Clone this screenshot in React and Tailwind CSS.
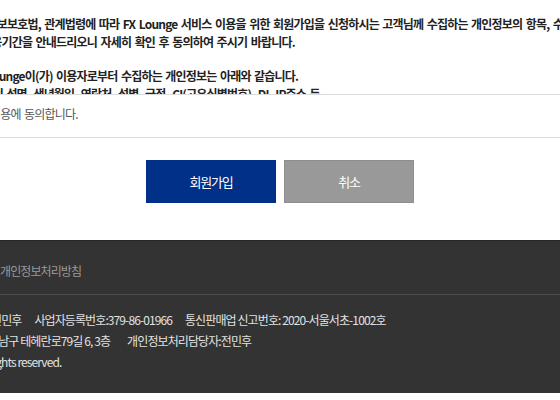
export default function App() {
  const base = "font-['Noto_Sans_CJK_KR',sans-serif] tracking-[-0.8px] [word-spacing:1.5px]";
  return (
    <div className={`w-[560px] h-[400px] overflow-hidden bg-white flex flex-col ${base}`}>
      {/* Terms scroll box */}
      <div className="h-[95px] shrink-0 overflow-hidden border-b border-[#dcdcdc] pt-[15px] text-[12px] font-bold text-[#222] leading-[18px]">
        <div className="whitespace-nowrap">
          <div className="ml-[-34px]">개인정보보호법, 관계법령에 따라 FX Lounge 서비스 이용을 위한 회원가입을 신청하시는 고객님께 수집하는 개인정보의 항목, 수집 및 이용목적,</div>
          <div className="ml-[-19px]">이용기간을 안내드리오니 자세히 확인 후 동의하여 주시기 바랍니다.</div>
        </div>
        <div className="whitespace-nowrap mt-[16px]">
          <div className="ml-[-30px]">FX Lounge이(가) 이용자로부터 수집하는 개인정보는 아래와 같습니다.</div>
          <div className="ml-[-38px]">이용자의 성명, 생년월일, 연락처, 성별, 국적, CI(고유식별번호), DI, IP주소 등</div>
        </div>
      </div>

      {/* Agree row */}
      <div className="h-[43px] shrink-0 border-b border-[#dcdcdc] flex items-center pb-[4px] text-[12px] text-[#555] whitespace-nowrap">
        <span className="ml-[-10px]">이용에 동의합니다.</span>
      </div>

      {/* Buttons */}
      <div className="shrink-0 flex justify-center gap-[8px] pt-[22px]">
        <button className="w-[130px] h-[43px] bg-[#003087] text-white text-[13px] tracking-[-1.2px]">회원가입</button>
        <button className="w-[130px] h-[43px] bg-[#999999] border border-[#8e8e8e] text-white text-[13px] tracking-[-1.2px]">취소</button>
      </div>

      {/* Footer */}
      <div className="mt-[37px] shrink-0 bg-[#333333] border-t border-[#262626] text-[12px] tracking-[-0.9px] [word-spacing:0px]">
        <div className="h-[54px] flex items-center pt-[6px] border-b border-[#4a4a4a] text-[#9a9a9a] whitespace-nowrap">
          <span>개인정보처리방침</span>
        </div>
        <div className="pt-[14px] pb-[21px] leading-[21px] text-[#e2e2e2] whitespace-nowrap">
          <div className="flex gap-[13px] ml-[-9px]">
            <span>전민후</span>
            <span>사업자등록번호:379-86-01966</span>
            <span>통신판매업 신고번호: 2020-서울서초-1002호</span>
          </div>
          <div className="flex gap-[17px] ml-[-12px]">
            <span>강남구 테헤란로79길 6, 3층</span>
            <span>개인정보처리담당자:전민후</span>
          </div>
          <div className="ml-[-11px]">rights reserved.</div>
        </div>
      </div>
    </div>
  );
}
